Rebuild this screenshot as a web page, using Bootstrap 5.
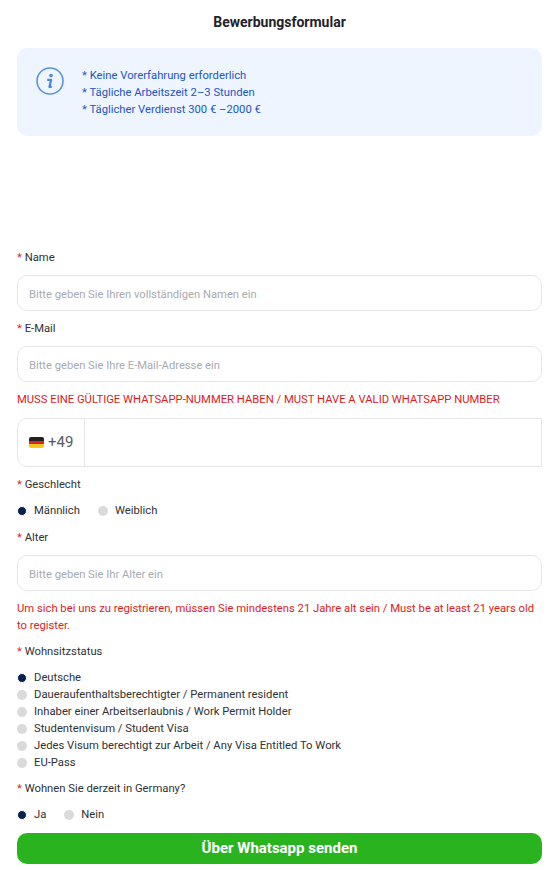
<!DOCTYPE html>
<html lang="de">
<head>
    <meta charset="UTF-8">
    <meta name="viewport" content="width=device-width, initial-scale=1.0">
    <title>Bewerbungsformular</title>
    <link href="https://cdn.jsdelivr.net/npm/bootstrap@5.3.0/dist/css/bootstrap.min.css" rel="stylesheet">
    <style>
        body { font-family: Roboto, "Liberation Sans", sans-serif; font-size: 11.25px; color: #303133; background: #fff; }
        .page-wrap { padding: 0 17px; height: 870px; overflow: hidden; }
        .page-title { font-size: 14px; font-weight: 700; color: #1f2329; line-height: 20px; padding-top: 12px; margin: 0 0 16px; text-align: center; }
        .info-box { background: #eef5ff; border-radius: 10px; height: 88px; padding: 0 19px; color: #1d55c4; line-height: 17px; margin-bottom: 112px; gap: 18px; }
        .info-icon { width: 28px; height: 28px; margin-top: -22px; flex: none; }
        .field-label { line-height: 20px; margin: 8px 0 0; }
        .field-label.wide-gap { margin-top: 9px; }
        .req { color: #e0262b; }
        .text-field { display: block; width: 100%; height: 36px; margin-top: 7px; border: 1px solid #e6e6e8; border-radius: 10px; padding: 2px 11px 0; font-size: 11.2px; outline: 0; background: #fff; }
        .text-field::placeholder { color: #a8abb2; opacity: 1; }
        .warn-text { color: #dd1c22; line-height: 17px; margin: 9px 0 0; }
        .phone-box { height: 49px; margin-top: 10px; border: 1px solid #e6e6e8; border-radius: 10px 0 0 10px; }
        .phone-code { width: 67px; border-right: 1px solid #e6e6e8; padding-left: 11px; gap: 4px; font-size: 15px; color: #555a60; }
        .flag-de { width: 15px; height: 11px; border-radius: 2px; background: linear-gradient(#222 33%, #d8232a 33%, #d8232a 66%, #f5c518 66%); }
        .radio-box { width: 10px; height: 10px; border-radius: 50%; background: #dadada; flex: none; margin-right: 7px; }
        .radio-box.on { background: #06214f; border: 1px solid #fff; }
        .radio-row { line-height: 17px; }
        .radio-group { margin-top: 7px; }
        .radio-next { margin-left: 18px; }
        .send-btn { display: block; width: 100%; height: 31px; margin-top: 10px; border: 0; border-radius: 10px; background: #29b31f; color: #fff; font-size: 15px; font-weight: 700; line-height: 31px; padding: 0; }
    </style>
</head>
<body>
    <div class="page-wrap">
        <h1 class="page-title">Bewerbungsformular</h1>

        <div class="info-box d-flex align-items-center">
            <svg class="info-icon" viewBox="0 0 28 28" fill="none">
                <circle cx="14" cy="14" r="13" stroke="#5c92e0" stroke-width="1.6"/>
                <circle cx="15" cy="8.6" r="1.8" fill="#4f86dc"/>
                <path d="M11.2 12.9h3.9l-1.7 7h2.4" stroke="#4f86dc" stroke-width="2.2" stroke-linejoin="round"/>
            </svg>
            <div>
                <div>* Keine Vorerfahrung erforderlich</div>
                <div>* Tägliche Arbeitszeit 2–3 Stunden</div>
                <div>* Täglicher Verdienst 300 € –2000 €</div>
            </div>
        </div>

        <form>
            <p class="field-label"><span class="req">*</span> Name</p>
            <input class="text-field" type="text" placeholder="Bitte geben Sie Ihren vollständigen Namen ein">

            <p class="field-label"><span class="req">*</span> E-Mail</p>
            <input class="text-field" type="text" placeholder="Bitte geben Sie Ihre E-Mail-Adresse ein">

            <p class="warn-text">MUSS EINE GÜLTIGE WHATSAPP-NUMMER HABEN / MUST HAVE A VALID WHATSAPP NUMBER</p>
            <div class="phone-box d-flex">
                <div class="phone-code d-flex align-items-center"><span class="flag-de"></span><span>+49</span></div>
            </div>

            <p class="field-label"><span class="req">*</span> Geschlecht</p>
            <div class="radio-group radio-row d-flex align-items-center">
                <span class="radio-box on"></span><span>Männlich</span>
                <span class="radio-box radio-next"></span><span>Weiblich</span>
            </div>

            <p class="field-label wide-gap"><span class="req">*</span> Alter</p>
            <input class="text-field" type="text" placeholder="Bitte geben Sie Ihr Alter ein">
            <p class="warn-text">Um sich bei uns zu registrieren, müssen Sie mindestens 21 Jahre alt sein / Must be at least 21 years old to register.</p>

            <p class="field-label"><span class="req">*</span> Wohnsitzstatus</p>
            <div class="radio-group">
                <div class="radio-row d-flex align-items-center"><span class="radio-box on"></span>Deutsche</div>
                <div class="radio-row d-flex align-items-center"><span class="radio-box"></span>Daueraufenthaltsberechtigter / Permanent resident</div>
                <div class="radio-row d-flex align-items-center"><span class="radio-box"></span>Inhaber einer Arbeitserlaubnis / Work Permit Holder</div>
                <div class="radio-row d-flex align-items-center"><span class="radio-box"></span>Studentenvisum / Student Visa</div>
                <div class="radio-row d-flex align-items-center"><span class="radio-box"></span>Jedes Visum berechtigt zur Arbeit / Any Visa Entitled To Work</div>
                <div class="radio-row d-flex align-items-center"><span class="radio-box"></span>EU-Pass</div>
            </div>

            <p class="field-label"><span class="req">*</span> Wohnen Sie derzeit in Germany?</p>
            <div class="radio-group radio-row d-flex align-items-center">
                <span class="radio-box on"></span><span>Ja</span>
                <span class="radio-box radio-next"></span><span>Nein</span>
            </div>

            <button class="send-btn" type="button">Über Whatsapp senden</button>
        </form>
    </div>
    <script src="https://cdn.jsdelivr.net/npm/bootstrap@5.3.0/dist/js/bootstrap.bundle.min.js"></script>
</body>
</html>
